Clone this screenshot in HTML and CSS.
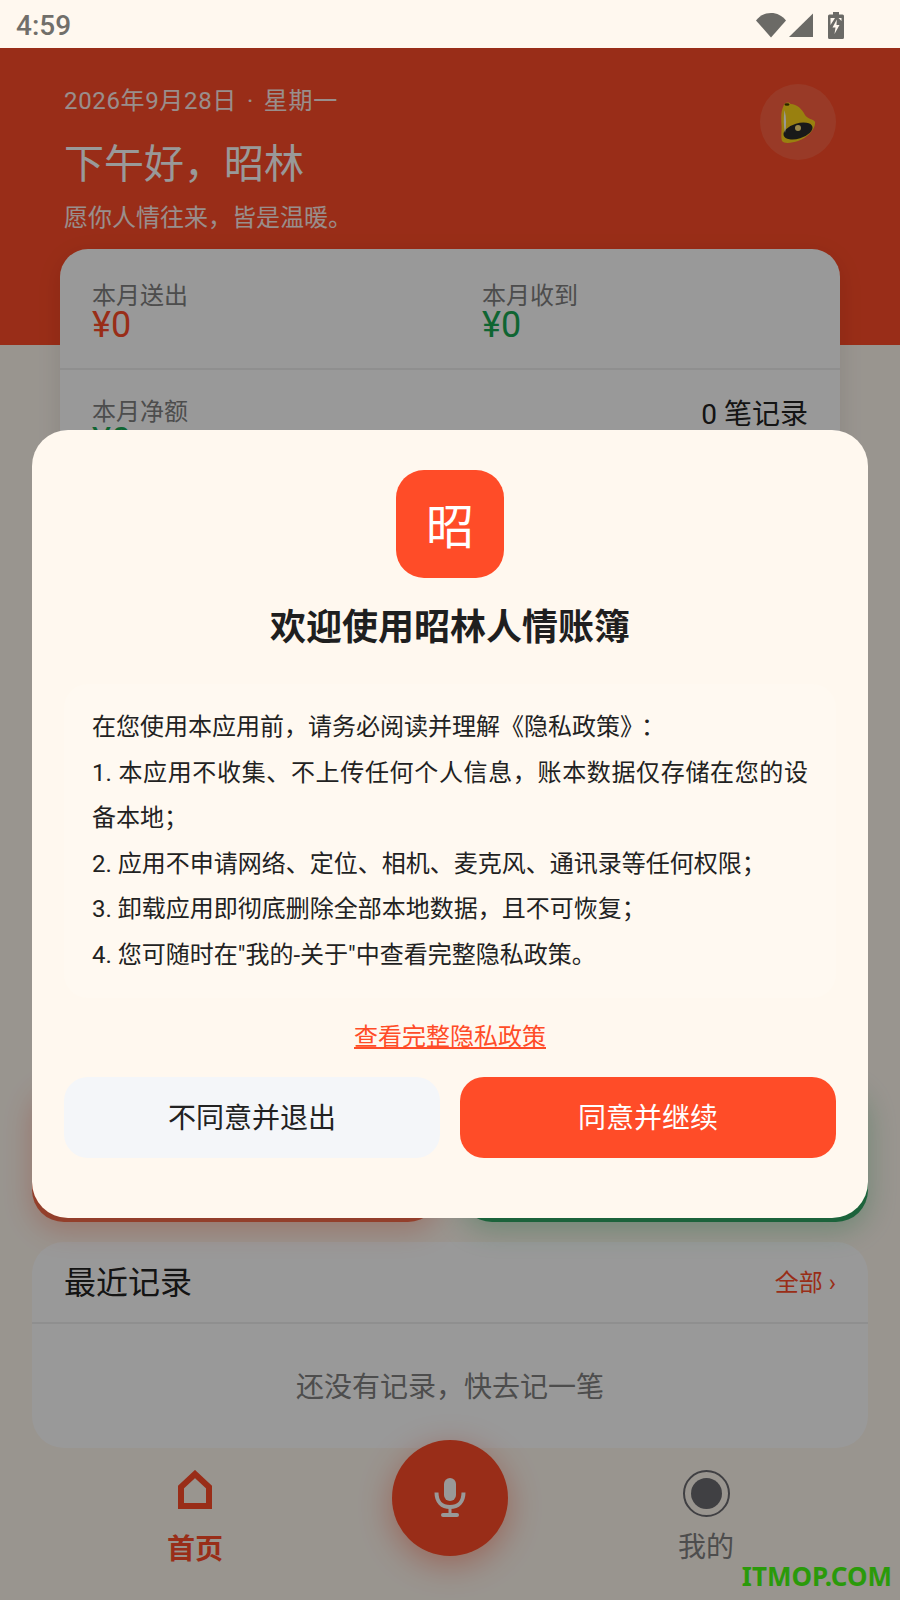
FILE: index.html
```html
<!DOCTYPE html>
<html lang="zh-CN">
<head>
    <meta charset="UTF-8">
    <meta name="viewport" content="width=device-width, initial-scale=1.0">
    <title>昭林人情账簿</title>
    <link rel="stylesheet" href="styles.css">
</head>
<body>
    <div class="phone">
        <div class="status-bar">
            <span class="status-time">4:59</span>
            <div class="status-icons">
                <svg class="icon-wifi" width="30" height="26" viewBox="0 0 30 26"><path d="M0 8.500C4 3.500 9 1 15 1s11 2.500 15 7.500L15 25.500z"/></svg>
                <svg class="icon-signal" width="26" height="26" viewBox="0 0 26 26"><path d="M25 1.500V25H1z"/></svg>
                <svg class="icon-battery" width="16" height="27" viewBox="0 0 16 27"><path fill-rule="evenodd" d="M5 0h6v2.500h3.500q1.500 0 1.500 1.500v21.500q0 1.500-1.500 1.500h-13Q0 27 0 25.500V4q0-1.500 1.500-1.500H5zM2.500 6v7L7 6zM13.500 6H10.500L13.500 9zM8.800 7.500 4.500 15.500h3L6.500 22l5-9h-3z"/></svg>
            </div>
        </div>

        <header class="hero">
            <div class="hero-text">
                <div class="hero-date">2026年9月28日<span class="hero-dot">·</span>星期一</div>
                <div class="hero-greeting">下午好，昭林</div>
                <div class="hero-sub">愿你人情往来，皆是温暖。</div>
            </div>
            <div class="bell-btn">
                <svg width="36" height="42" viewBox="0 0 36 42">
                    <path d="M3.500 5C4 1.500 9 .5 10.500 3 17 3 22 8 25 14c2 4 9 4 10 7 1 6-7 16-17 19-6 2-14 3-16 0-1.500-4 0-10-.5-16C1 16 1 10 3.500 5z" fill="#ffd619"/>
                    <ellipse cx="18" cy="30" rx="15" ry="7.500" transform="rotate(-17 18 30)" fill="#2b2b2b"/>
                    <circle cx="18" cy="27" r="3" fill="#ffe27a"/>
                    <path d="M4.500 9c-1 8-1 16 .5 23 1.500-7 1.500-16-.5-23z" fill="#fff"/>
                    <ellipse cx="7" cy="3.500" rx="2.500" ry="1.200" fill="#4a3a00"/>
                </svg>
            </div>
        </header>

        <main class="content">
            <section class="stat-card">
                <div class="stat-row">
                    <div class="stat-cell">
                        <div class="stat-label">本月送出</div>
                        <div class="stat-value red">¥0</div>
                    </div>
                    <div class="stat-cell">
                        <div class="stat-label">本月收到</div>
                        <div class="stat-value green">¥0</div>
                    </div>
                </div>
                <div class="stat-row stat-row-bottom">
                    <div class="stat-cell">
                        <div class="stat-label">本月净额</div>
                        <div class="stat-value green">¥0</div>
                    </div>
                    <div class="stat-count">0 笔记录</div>
                </div>
            </section>

            <section class="actions">
                <div class="action action-send"></div>
                <div class="action action-receive"></div>
            </section>

            <section class="recent">
                <div class="recent-head">
                    <span class="recent-title">最近记录</span>
                    <span class="recent-all">全部 ›</span>
                </div>
                <div class="recent-empty">还没有记录，快去记一笔</div>
            </section>
        </main>

        <nav class="tabbar">
            <div class="tab tab-active">
                <svg width="34" height="39" viewBox="0 0 34 39"><path d="M17 4 3 17v19h28V17z" fill="none" stroke="#ff4c28" stroke-width="6"/></svg>
                <span>首页</span>
            </div>
            <div class="tab">
                <svg width="47" height="47" viewBox="0 0 47 47"><circle cx="23.500" cy="23.500" r="22.500" fill="none" stroke="#6b6b70" stroke-width="2"/><circle cx="23.500" cy="23.500" r="15.500" fill="#6b6b70"/></svg>
                <span>我的</span>
            </div>
        </nav>
        <div class="fab">
            <svg width="32" height="40" viewBox="0 0 32 40"><rect x="10" y="0" width="12" height="23" rx="6" fill="#fff"/><path d="M2.500 14.500C2.500 24 8 29 16 29s13.500-5 13.500-14.500" fill="none" stroke="#fff" stroke-width="4"/><rect x="14.500" y="28" width="3" height="8" fill="#fff"/><rect x="7" y="35" width="18" height="4" rx="2" fill="#fff"/></svg>
        </div>

        <div class="overlay">
            <div class="dialog">
                <div class="logo">昭</div>
                <h2 class="dialog-title">欢迎使用昭林人情账簿</h2>
                <div class="policy">
                    <p>在您使用本应用前，请务必阅读并理解《隐私政策》<span class="colon">：</span></p>
                    <p>1. 本应用不收集、不上传任何个人信息，账本数据仅存储在您的设备本地；</p>
                    <p>2. 应用不申请网络、定位、相机、麦克风、通讯录等任何权限；</p>
                    <p>3. 卸载应用即彻底删除全部本地数据，且不可恢复；</p>
                    <p>4. 您可随时在"我的-关于"中查看完整隐私政策。</p>
                </div>
                <a class="policy-link">查看完整隐私政策</a>
                <div class="dialog-btns">
                    <button class="btn btn-cancel">不同意并退出</button>
                    <button class="btn btn-ok">同意并继续</button>
                </div>
            </div>
        </div>

        <div class="watermark">ITMOP.COM</div>
    </div>
</body>
</html>
```

FILE: styles.css
```css
* {
    box-sizing: border-box;
}
body {
    margin: 0;
    font-family: Roboto, "Noto Sans CJK SC", sans-serif;
    background: #fff8ef;
    color: #1f1f1f;
}
.phone {
    position: relative;
    width: 900px;
    height: 1600px;
    overflow: hidden;
    display: flex;
    flex-direction: column;
}

/* status bar */
.status-bar {
    flex: none;
    height: 48px;
    padding: 2px 56px 0 16px;
    display: flex;
    align-items: center;
    justify-content: space-between;
    background: #fff8ef;
    color: #716f6a;
}
.status-time {
    font-size: 28px;
    font-weight: 500;
}
.status-icons {
    display: flex;
    align-items: center;
    fill: #6b6a66;
}
.icon-signal {
    margin-left: 2px;
}
.icon-battery {
    margin-left: 14px;
}

/* header */
.hero {
    flex: none;
    height: 297px;
    padding: 35px 64px 0 64px;
    display: flex;
    justify-content: space-between;
    align-items: flex-start;
    background: #ff4c28;
    color: #fff;
}
.hero-date {
    font-size: 24px;
    line-height: 36px;
    letter-spacing: 0.65px;
    opacity: 0.9;
}
.hero-dot {
    margin: 0 10px;
}
.hero-greeting {
    margin-top: 18px;
    font-size: 40px;
    line-height: 56px;
}
.hero-sub {
    margin-top: 8px;
    font-size: 24px;
    line-height: 34px;
    opacity: 0.9;
}
.bell-btn {
    width: 76px;
    height: 76px;
    margin-top: 1px;
    border-radius: 50%;
    background: rgba(255, 255, 255, 0.12);
    display: flex;
    align-items: center;
    justify-content: center;
}

/* page content */
.content {
    flex: none;
    margin-top: -96px;
    padding: 0 32px;
}
.stat-card {
    height: 240px;
    margin: 0 28px;
    border-radius: 28px;
    background: #fff;
    box-shadow: 0 6px 24px rgba(0, 0, 0, 0.1);
}
.stat-row {
    display: flex;
    height: 119px;
}
.stat-row-bottom {
    height: 119px;
    border-top: 2px solid #eee;
    justify-content: space-between;
}
.stat-cell {
    width: 50%;
    padding: 31px 32px 0;
}
.stat-row-bottom .stat-cell {
    padding-top: 26px;
}
.stat-label {
    font-size: 24px;
    line-height: 32px;
    color: #808080;
}
.stat-value {
    font-size: 36px;
    line-height: 27px;
}
.red {
    color: #ff4c28;
}
.green {
    color: #19a854;
}
.stat-count {
    padding: 26px 32px 0 0;
    font-size: 28px;
    line-height: 38px;
    color: #222;
}

.actions {
    position: relative;
    z-index: 1;
    margin-top: 593px;
    display: flex;
    gap: 20px;
}
.action {
    flex: 1;
    height: 140px;
    border-radius: 32px;
}
.action-send {
    background: #f56a48;
    box-shadow: 0 8px 28px rgba(255, 76, 40, 0.3);
}
.action-receive {
    background: #2fa563;
    box-shadow: 0 8px 28px rgba(25, 176, 90, 0.3);
}

.recent {
    margin-top: 20px;
    height: 206px;
    border-radius: 32px;
    background: #fff;
    display: flex;
    flex-direction: column;
}
.recent-head {
    height: 82px;
    padding: 0 32px 4px;
    border-bottom: 2px solid #eee;
    display: flex;
    align-items: center;
    justify-content: space-between;
}
.recent-title {
    font-size: 32px;
    color: #222;
}
.recent-all {
    font-size: 24px;
    color: #ff4c28;
}
.recent-empty {
    flex: 1;
    padding-bottom: 3px;
    display: flex;
    align-items: center;
    justify-content: center;
    font-size: 28px;
    color: #808080;
}

/* bottom tabs */
.tabbar {
    flex: none;
    height: 152px;
    padding: 22px 0 0;
    display: flex;
    justify-content: space-between;
}
.tab {
    width: 390px;
    display: flex;
    flex-direction: column;
    align-items: center;
    font-size: 28px;
    line-height: 40px;
    color: #808080;
}
.tab span {
    margin-top: 11px;
}
.tab-active {
    color: #ff4c28;
    font-weight: 700;
}
.tab-active span {
    margin-top: 21px;
}
.tab:last-child {
    width: 388px;
}
.fab {
    position: absolute;
    left: 392px;
    top: 1440px;
    width: 116px;
    height: 116px;
    border-radius: 50%;
    background: #ff4c28;
    box-shadow: 0 8px 32px rgba(255, 76, 40, 0.45);
    display: flex;
    align-items: center;
    justify-content: center;
}

/* privacy dialog */
.overlay {
    position: absolute;
    z-index: 2;
    top: 48px;
    left: 0;
    right: 0;
    bottom: 0;
    background: rgba(0, 0, 0, 0.4);
    display: flex;
    align-items: center;
    justify-content: center;
}
.dialog {
    width: 836px;
    height: 788px;
    padding: 40px 32px 0;
    border-radius: 36px;
    background: #fff8ef;
    display: flex;
    flex-direction: column;
    align-items: center;
}
.logo {
    width: 108px;
    height: 108px;
    padding-bottom: 3px;
    border-radius: 28px;
    background: #ff4c28;
    color: #fff;
    font-size: 48px;
    display: flex;
    align-items: center;
    justify-content: center;
}
.dialog-title {
    margin: 25px 0 31px;
    font-size: 36px;
    line-height: 50px;
    font-weight: 700;
    color: #1f1f1f;
}
.policy {
    width: 100%;
    padding: 21px 28px 19px;
    border-radius: 24px;
    background: #fff9f1;
    font-size: 24px;
    line-height: 45.6px;
    color: #222;
    text-align: justify;
}
.policy p {
    margin: 0;
}
.colon {
    margin-left: 9px;
}
.policy-link {
    margin-top: 22px;
    font-size: 24px;
    line-height: 34px;
    color: #ff4c28;
    text-decoration: underline;
}
.dialog-btns {
    width: 100%;
    margin-top: 23px;
    display: flex;
    gap: 20px;
}
.btn {
    flex: 1;
    height: 81px;
    padding: 0 0 3px;
    border: 0;
    border-radius: 24px;
    font-family: inherit;
    font-size: 28px;
}
.btn-cancel {
    background: #f4f6f9;
    color: #222;
}
.btn-ok {
    background: #ff4c28;
    color: #fff;
}

.watermark {
    position: absolute;
    z-index: 3;
    right: 8px;
    top: 1558px;
    font-family: "Noto Sans", sans-serif;
    font-size: 26px;
    line-height: 36px;
    font-weight: 700;
    color: #2a9a0a;
}
```
